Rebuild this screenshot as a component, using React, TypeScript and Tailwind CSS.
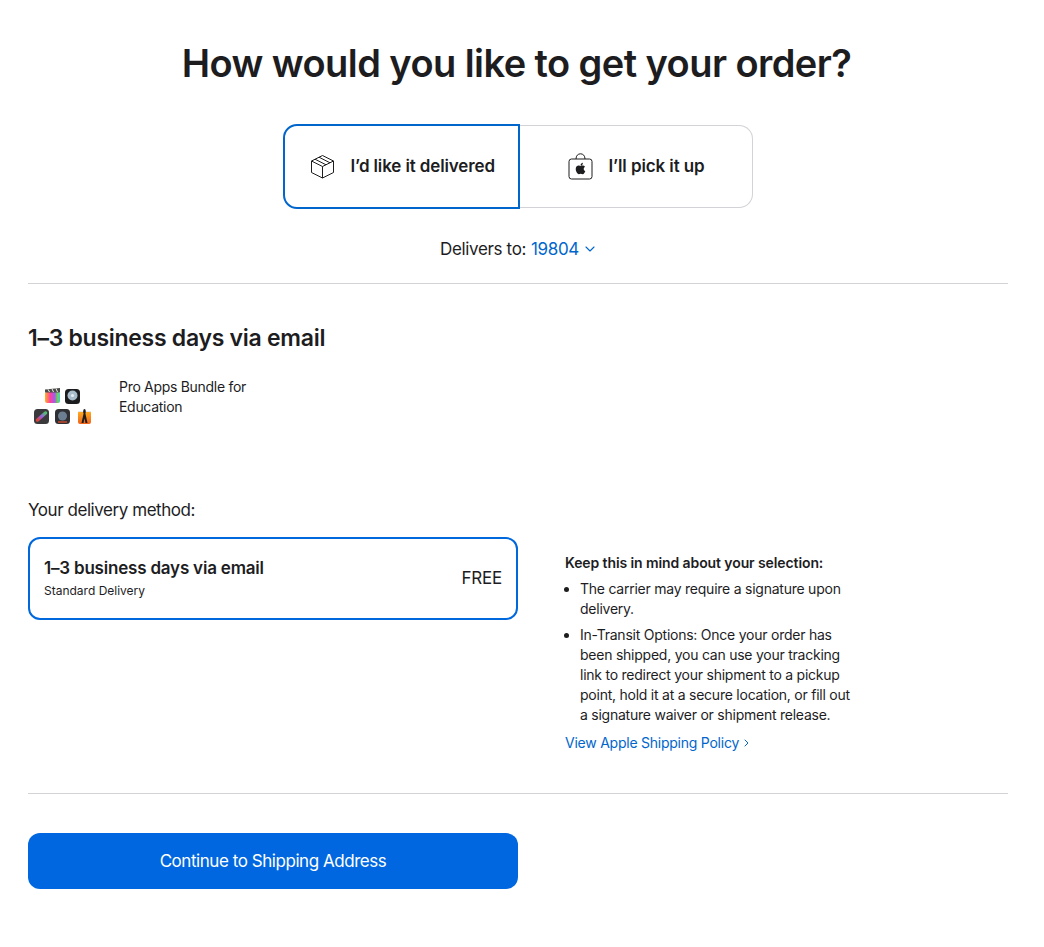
import { FaApple } from "react-icons/fa";

function BoxIcon() {
  return (
    <svg width="25" height="25" viewBox="0 0 25 25" fill="none" stroke="#1d1d1f" strokeWidth="1" strokeLinejoin="round">
      <path d="M12.5 1.5 L23.5 7 V18.5 L12.5 24 L1.5 18.5 V7 Z" />
      <path d="M1.5 7 L12.5 12.5 L23.5 7 M12.5 12.5 V24" />
      <path d="M5 5.2 L16 10.8 M9 3.2 L20 8.8" />
    </svg>
  );
}

function BagIcon() {
  return (
    <div className="relative h-[27px] w-[25px]">
      <svg width="25" height="27" viewBox="0 0 25 27" fill="none" stroke="#1d1d1f" strokeWidth="1">
        <rect x="1" y="6" width="23" height="20" rx="2.5" />
        <path d="M8 6 C8 2.6 10 0.8 12.5 0.8 C15 0.8 17 2.6 17 6" />
      </svg>
      <FaApple className="absolute left-[6px] top-[8.5px] text-[13px] text-[#1d1d1f]" />
    </div>
  );
}

function ChevronDown() {
  return (
    <svg width="10" height="6" viewBox="0 0 10 6" fill="none" stroke="#0066cc" strokeWidth="1.1" strokeLinecap="round" strokeLinejoin="round">
      <path d="M1 1 L5 5 L9 1" />
    </svg>
  );
}

function ChevronRight() {
  return (
    <svg width="5" height="8" viewBox="0 0 5 8" fill="none" stroke="#0066cc" strokeWidth="1" strokeLinecap="round" strokeLinejoin="round">
      <path d="M1 1 L4 4 L1 7" />
    </svg>
  );
}

function AppIcons() {
  return (
    <svg width="62" height="40" viewBox="0 0 62 40" className="shrink-0">
      <defs>
        <linearGradient id="fcp" x1="0" y1="0" x2="1" y2="0">
          <stop offset="0" stopColor="#ffb11f" />
          <stop offset="0.35" stopColor="#ff3f9e" />
          <stop offset="0.65" stopColor="#a25cf0" />
          <stop offset="0.85" stopColor="#6fdc3a" />
          <stop offset="1" stopColor="#35c8f2" />
        </linearGradient>
        <linearGradient id="mainstage" x1="0" y1="0" x2="0" y2="1">
          <stop offset="0" stopColor="#ffb01f" />
          <stop offset="1" stopColor="#f0621a" />
        </linearGradient>
        <linearGradient id="motion" x1="0" y1="1" x2="1" y2="0">
          <stop offset="0" stopColor="#d9453a" />
          <stop offset="0.5" stopColor="#9c5de0" />
          <stop offset="1" stopColor="#50c070" />
        </linearGradient>
      </defs>
      {/* Final Cut Pro */}
      <rect x="14" y="6" width="15" height="11" rx="2" fill="url(#fcp)" />
      <path d="M14 3.5 L29 2 V6.5 H14 Z" fill="#4a4a48" />
      <path d="M17 3.3 L18.5 6 M21 2.9 L22.5 6 M25 2.5 L26.5 6" stroke="#eee" strokeWidth="1" />
      {/* Logic Pro */}
      <rect x="34" y="3" width="15" height="15" rx="3.5" fill="#1c1c1e" />
      <circle cx="41.5" cy="9.5" r="5" fill="#a9bccb" />
      <circle cx="41.5" cy="9.5" r="1.6" fill="#e6edf2" />
      {/* Motion */}
      <rect x="3" y="23" width="15" height="15" rx="3.5" fill="#3a3a3c" />
      <path d="M6.5 34 L14.5 27" stroke="url(#motion)" strokeWidth="3.5" strokeLinecap="round" />
      {/* Compressor */}
      <rect x="24" y="23" width="15" height="15" rx="3.5" fill="#2f3033" />
      <circle cx="31.5" cy="30" r="4.5" fill="#6c7f92" />
      <path d="M27 36 H36" stroke="#c9482f" strokeWidth="1.5" />
      {/* MainStage */}
      <rect x="47" y="25" width="13" height="13" rx="2" fill="url(#mainstage)" />
      <path d="M47 25 H60 V26 H47 Z" fill="#e8e8e8" />
      <path d="M53.5 23 C55 23 55 26.5 54.4 27.5 L56.5 37 H54.5 L53.5 32.5 L52.5 37 H50.5 L52.6 27.5 C52 26.5 52 23 53.5 23 Z" fill="#1c1c1e" />
    </svg>
  );
}

export default function App() {
  return (
    <div className="h-[947px] bg-white pl-[28px] pr-[36px] pt-[39px] text-[#1d1d1f] font-['Inter','Liberation_Sans',sans-serif]">
      <h1 className="pr-[3px] text-center text-[38px] leading-[48px] font-semibold tracking-[-0.57px]">
        How would you like to get your order?
      </h1>

      <div className="mt-[37px] flex justify-center pr-[1px]">
        <button className="flex h-[85px] w-[237px] items-center gap-[16px] rounded-l-[14px] border-2 border-[#0066cc] pl-[25px] text-[17px] font-semibold tracking-[-0.13px]">
          <BoxIcon />
          <span>I’d like it delivered</span>
        </button>
        <button className="mt-[1px] flex h-[83px] w-[233px] items-center gap-[16px] rounded-r-[14px] border border-l-0 border-[#d2d2d7] pl-[48px] text-[17px] font-semibold tracking-[-0.1px]">
          <BagIcon />
          <span>I’ll pick it up</span>
        </button>
      </div>

      <div className="mt-[28px] flex items-center justify-center gap-[5px] pr-[1px] text-[17px] leading-[24px] tracking-[-0.35px]">
        <span>Delivers to:</span>
        <a className="flex items-center gap-[6px] text-[#0066cc]">
          19804
          <ChevronDown />
        </a>
      </div>

      <hr className="mt-[22px] border-[#d2d2d7]" />

      <h2 className="mt-[39px] text-[23px] leading-[30px] font-semibold tracking-[-0.28px]">
        1–3 business days via email
      </h2>

      <div className="mt-[33px] flex items-start gap-[26px] pl-[3px]">
        <AppIcons />
        <p className="-mt-[9px] w-[150px] text-[14px] leading-[20px] tracking-[-0.3px]">
          Pro Apps Bundle for Education
        </p>
      </div>

      <p className="mt-[72px] text-[17px] leading-[24px] tracking-[-0.44px]">Your delivery method:</p>

      <div className="mt-[15px] flex items-start">
        <div className="flex h-[83px] w-[490px] shrink-0 items-center justify-between rounded-[12px] border-2 border-[#0068dd] pl-[14px] pr-[14px]">
          <div className="-mt-[2px]">
            <p className="text-[17px] leading-[24px] font-semibold tracking-[-0.2px]">1–3 business days via email</p>
            <p className="mt-[2px] text-[12px] leading-[18px]">Standard Delivery</p>
          </div>
          <span className="text-[17px] tracking-[-0.2px]">FREE</span>
        </div>

        <div className="ml-[47px] mt-[16px] w-[290px] text-[14px] leading-[20px] tracking-[-0.24px]">
          <p className="font-semibold tracking-[-0.1px]">Keep this in mind about your selection:</p>
          <ul className="mt-[6px] list-disc space-y-[6px] pl-[15px]">
            <li>The carrier may require a signature upon delivery.</li>
            <li>In-Transit Options: Once your order has been shipped, you can use your tracking link to redirect your shipment to a pickup point, hold it at a secure location, or fill out a signature waiver or shipment release.</li>
          </ul>
          <a className="mt-[8px] flex items-center gap-[5px] text-[#0066cc]">
            View Apple Shipping Policy
            <ChevronRight />
          </a>
        </div>
      </div>

      <hr className="mt-[40px] border-[#d2d2d7]" />

      <button className="mt-[39px] h-[56px] w-[490px] rounded-[12px] bg-[#0067e0] pt-[1px] text-[17px] tracking-[-0.45px] text-white">
        Continue to Shipping Address
      </button>
    </div>
  );
}
